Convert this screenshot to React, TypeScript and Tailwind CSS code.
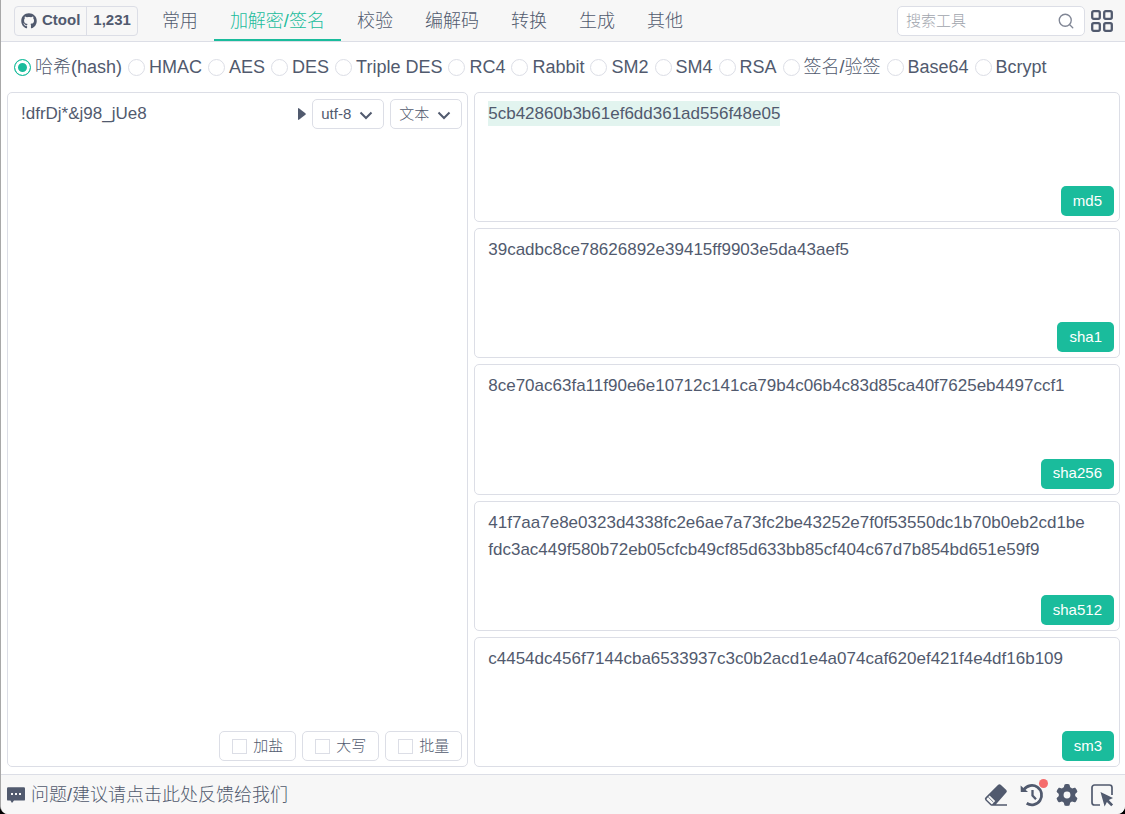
import React, { useState } from 'react';
import { FaGithub } from 'react-icons/fa';
import { FaGear } from 'react-icons/fa6';
import { Search } from 'lucide-react';

interface HashResult {
  name: string;
  value: string;
}

const categories = ['常用', '加解密/签名', '校验', '编解码', '转换', '生成', '其他'];

const tools = [
  '哈希(hash)',
  'HMAC',
  'AES',
  'DES',
  'Triple DES',
  'RC4',
  'Rabbit',
  'SM2',
  'SM4',
  'RSA',
  '签名/验签',
  'Base64',
  'Bcrypt',
];

const results: HashResult[] = [
  { name: 'md5', value: '5cb42860b3b61ef6dd361ad556f48e05' },
  { name: 'sha1', value: '39cadbc8ce78626892e39415ff9903e5da43aef5' },
  { name: 'sha256', value: '8ce70ac63fa11f90e6e10712c141ca79b4c06b4c83d85ca40f7625eb4497ccf1' },
  {
    name: 'sha512',
    value:
      '41f7aa7e8e0323d4338fc2e6ae7a73fc2be43252e7f0f53550dc1b70b0eb2cd1befdc3ac449f580b72eb05cfcb49cf85d633bb85cf404c67d7b854bd651e59f9',
  },
  { name: 'sm3', value: 'c4454dc456f7144cba6533937c3c0b2acd1e4a074caf620ef421f4e4df16b109' },
];

const options = ['加盐', '大写', '批量'];

const GridIcon = () => (
  <svg className="w-6 h-6" viewBox="0 0 24 24" fill="none" stroke="currentColor" strokeWidth={2.3}>
    <rect x="2.2" y="2.2" width="7.600" height="7.600" rx="1.5" />
    <rect x="14.200" y="2.2" width="7.600" height="7.600" rx="1.5" />
    <rect x="2.2" y="14.200" width="7.600" height="7.600" rx="1.5" />
    <rect x="14.200" y="14.200" width="7.600" height="7.600" rx="1.5" />
  </svg>
);

const EraserIcon = () => (
  <svg className="w-6 h-6" viewBox="0 0 24 24" fill="currentColor">
    <path
      d="M14.200 1.800a1.800 1.800 0 0 1 2.500 0l5.600 5.200a1.800 1.800 0 0 1 0 2.500L12 21.300h11v1.400H7.600a2 2 0 0 1-1.400-.6l-4.800-4.800a2 2 0 0 1 0-2.700zM5.600 12.600l-2.800 3a.8.8 0 0 0 0 1.100l4.500 4.300a.8.8 0 0 0 1.100 0l2.800-3z"
      fillRule="evenodd"
    />
    <path d="M4.200 14l5.200 5.200" stroke="currentColor" strokeWidth={0.8} />
  </svg>
);

const HistoryIcon = () => (
  <svg className="w-6 h-6" viewBox="0 0 24 24" fill="none" stroke="currentColor" strokeWidth={2.8}>
    <path d="M4 6.500A9.700 9.700 0 1 1 6.700 20.300" />
    <path d="M12.500 7v5.600l3.500 3.600" strokeWidth={2.3} />
    <path d="M.6 2.500l.2 6.500h7.200z" fill="currentColor" stroke="none" />
  </svg>
);

const PointerIcon = () => (
  <svg className="w-6 h-6" viewBox="0 0 24 24" fill="none">
    <path
      d="M10 22H4.500A2.500 2.500 0 0 1 2 19.500v-15A2.500 2.500 0 0 1 4.500 2h15A2.500 2.500 0 0 1 22 4.500V12"
      stroke="currentColor"
      strokeWidth={1.700}
    />
    <path d="M10.500 9l12.500 6-4.200 2 4.300 4.400-1.900 1.900-4.300-4.300-2.300 4.500z" fill="currentColor" />
  </svg>
);

const MessageIcon = () => (
  <svg className="w-[18px] h-[18px]" viewBox="0 0 18 18">
    <path
      d="M1.200 1.200h15.600a1.200 1.200 0 0 1 1.200 1.200v11a1.200 1.200 0 0 1-1.200 1.200H7l-2 2.400-1.600-2.400H1.200A1.200 1.200 0 0 1 0 13.400v-11a1.200 1.200 0 0 1 1.200-1.200z"
      fill="currentColor"
    />
    <path d="M4 7h2v2H4zM8 7h2v2H8zM12 7h2v2h-2z" fill="#f7f7f7" />
  </svg>
);

const SelectBox: React.FC<{ label: string; items: string[] }> = ({ label, items }) => (
  <div className="relative">
    <select
      aria-label={label}
      className="appearance-none w-18 h-[30px] pl-2 pr-7 border border-[#dcdee6] rounded-[5px] bg-white text-[15px] font-light"
    >
      {items.map((item) => (
        <option key={item}>{item}</option>
      ))}
    </select>
    <svg
      className="absolute right-2.5 top-2 w-4 h-4 pointer-events-none"
      viewBox="0 0 16 16"
      fill="none"
      stroke="currentColor"
      strokeWidth={2}
    >
      <path d="M2.500 5.500L8 11l5.500-5.500" />
    </svg>
  </div>
);

const App: React.FC = () => {
  const [category, setCategory] = useState('加解密/签名');
  const [tool, setTool] = useState('哈希(hash)');
  const [input, setInput] = useState('!dfrDj*&j98_jUe8');

  return (
    <div className="bg-black font-['Liberation_Sans','Noto_Sans_CJK_SC',sans-serif] text-[#515a6e]">
      <div className="min-h-screen flex flex-col bg-white border-l border-[#a8a8a8] rounded-b-lg overflow-hidden">
        {/* Header */}
        <header className="flex items-center h-[42px] pl-[13px] pr-[11px] bg-[#f7f7f7] border-b border-[#dcdee6]">
          <a href="#" className="flex items-center h-[30px] border border-[#dcdee6] rounded-[4px] text-[15px] font-bold">
            <span className="flex items-center gap-[5px] h-full px-1.5 border-r border-[#dcdee6]">
              <FaGithub className="w-4 h-4" />
              Ctool
            </span>
            <span className="px-1.5">1,231</span>
          </a>
          <nav className="flex self-stretch ml-2 text-lg">
            {categories.map((item) => (
              <button
                key={item}
                onClick={() => setCategory(item)}
                className={`px-4 pt-0.5 h-[41px] border-b-2 font-light ${
                  item === category ? 'border-[#1abc9c] text-[#1abc9c]' : 'border-transparent'
                }`}
              >
                {item}
              </button>
            ))}
          </nav>
          <div className="relative ml-auto">
            <input
              type="search"
              aria-label="搜索工具"
              placeholder="搜索工具"
              className="w-47 h-[30px] pl-2 pr-8 border border-[#dcdee6] rounded-[5px] bg-white text-[15px] font-light placeholder:text-[#a0a4ad]"
            />
            <Search className="absolute right-2.5 top-1.5 w-[18px] h-[18px] text-[#808695]" strokeWidth={1.8} />
          </div>
          <button aria-label="全部工具" className="ml-[5px]">
            <GridIcon />
          </button>
        </header>

        {/* Tool picker */}
        <div className="flex flex-wrap items-center gap-x-1.5 min-h-[50px] px-[13px] text-lg">
          {tools.map((item) => (
            <label key={item} className="flex items-center gap-1">
              <input
                type="radio"
                name="tool"
                checked={item === tool}
                onChange={() => setTool(item)}
                className="appearance-none w-[17px] h-[17px] rounded-full border border-[#dcdee6] bg-white checked:border-[#1abc9c] checked:bg-[#1abc9c] checked:shadow-[inset_0_0_0_3px_white]"
              />
              <span className="font-light">{item}</span>
            </label>
          ))}
        </div>

        {/* Input and results */}
        <main className="flex-1 grid grid-cols-[5fr_7fr] gap-1.5 pl-1.5 pr-[5px] pb-[7px]">
          <section className="flex flex-col border border-[#dcdee6] rounded-[5px] p-[5px]">
            <div className="flex-1 flex items-start">
              <textarea
                aria-label="输入内容"
                value={input}
                onChange={(e) => setInput(e.target.value)}
                className="flex-1 min-w-0 self-stretch resize-none outline-none pl-2 pt-0.5 text-[17px] leading-[27px]"
              />
              <div className="flex items-center gap-1.5 pt-px">
                <svg className="w-2 h-3" viewBox="0 0 8 12" fill="currentColor">
                  <path d="M0 1Q0-.5 1.200.4l6.200 4.800q.8.800 0 1.600l-6.200 4.800Q0 12.500 0 11z" />
                </svg>
                <SelectBox label="编码" items={['utf-8', 'gbk']} />
                <SelectBox label="类型" items={['文本', '文件']} />
              </div>
            </div>
            <div className="flex justify-end gap-1.5">
              {options.map((item) => (
                <label
                  key={item}
                  className="flex items-center gap-1.5 h-[30px] px-3 border border-[#dcdee6] rounded-[5px] text-[15px]"
                >
                  <input
                    type="checkbox"
                    className="appearance-none w-[15px] h-[15px] border border-[#dcdee6] bg-white checked:bg-[#1abc9c]"
                  />
                  <span className="font-light">{item}</span>
                </label>
              ))}
            </div>
          </section>

          <section className="grid auto-rows-fr gap-1.5">
            {results.map((result, index) => (
              <div
                key={result.name}
                className="flex flex-col justify-between border border-[#dcdee6] rounded-[5px] p-[5px]"
              >
                <p className="pl-2 pr-7 pt-0.5 text-[17px] leading-[27px] break-all">
                  {index === 0 ? (
                    <mark className="py-[3px] bg-[#e2f4ef] text-inherit">{result.value}</mark>
                  ) : (
                    result.value
                  )}
                </p>
                <button className="self-end h-[30px] px-3 rounded-[5px] bg-[#1abc9c] text-white text-[15px]">
                  {result.name}
                </button>
              </div>
            ))}
          </section>
        </main>

        {/* Footer */}
        <footer className="flex items-center h-10 pl-1.5 pr-[11px] bg-[#f7f7f7] border-t border-[#dcdee6]">
          <a href="#" className="flex items-center gap-1.5 text-lg font-light">
            <MessageIcon />
            问题/建议请点击此处反馈给我们
          </a>
          <div className="flex items-center gap-3 ml-auto">
            <button aria-label="清空">
              <EraserIcon />
            </button>
            <button aria-label="历史记录" className="relative">
              <HistoryIcon />
              <span className="absolute -top-1 -right-1 w-[9px] h-[9px] rounded-full bg-[#f56c6c]" />
            </button>
            <button aria-label="设置">
              <FaGear className="w-[22px] h-[22px]" />
            </button>
            <button aria-label="新窗口">
              <PointerIcon />
            </button>
          </div>
        </footer>
      </div>
    </div>
  );
};

export default App;
